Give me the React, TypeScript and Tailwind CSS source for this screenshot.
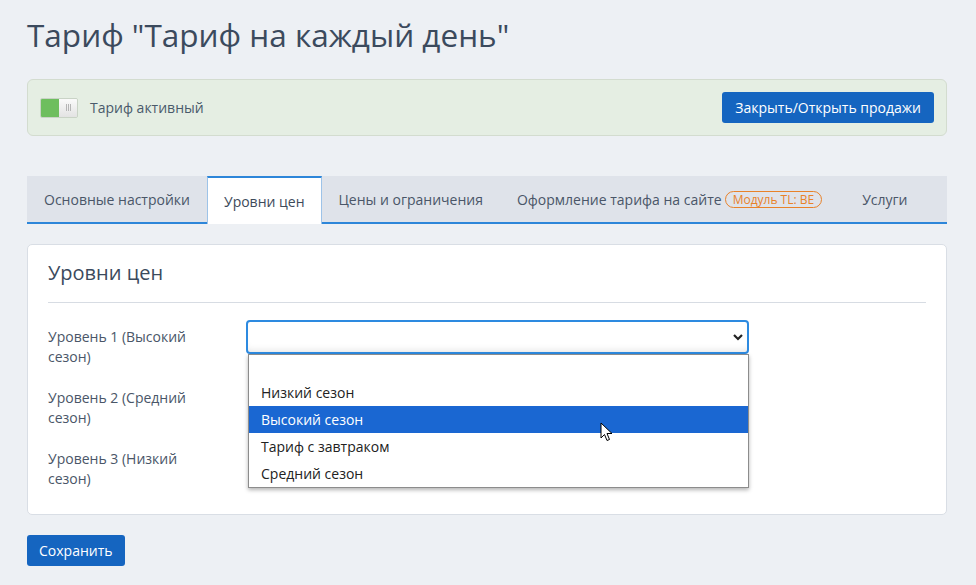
import React from "react";

const font = { fontFamily: '"Open Sans", "Noto Sans", sans-serif' };

function Cursor() {
  return (
    <svg width="14" height="22" viewBox="0 0 14 22" className="absolute left-[600px] top-[422px]">
      <path d="M1 1 L1 16 L4.5 12.5 L7 18.5 L9.5 17.5 L7 11.5 L12 11.5 Z" fill="white" stroke="black" strokeWidth="1" strokeLinejoin="round" />
    </svg>
  );
}

export default function App() {
  const options = ["", "Низкий сезон", "Высокий сезон", "Тариф с завтраком", "Средний сезон"];
  return (
    <div className="relative w-[976px] h-[585px] overflow-hidden bg-[#edf0f4] text-[#3d4a5a]" style={font}>
      <div className="px-[27px] pt-[16px]">
        <h1 className="text-[31.5px] leading-[38px] text-[#3b4a5d]">Тариф "Тариф на каждый день"</h1>

        <div className="mt-[25px] h-[57px] w-[920px] flex items-center justify-between rounded-[6px] border border-[#d3dccf] bg-[#e5eee3] pl-[12px] pr-[12px]">
          <div className="flex items-center gap-[12px]">
            <div className="flex h-[20px] w-[38px] overflow-hidden rounded-[2px] border border-[#c9d3c6]">
              <div className="w-[19px] bg-[#6ebe5e]" />
              <div className="flex w-[19px] items-center justify-center bg-gradient-to-b from-[#fafafa] to-[#e3e3e3]">
                <div className="flex gap-[1px]">
                  <div className="h-[7px] w-px bg-[#b5b5b5]" />
                  <div className="h-[7px] w-px bg-[#b5b5b5]" />
                  <div className="h-[7px] w-px bg-[#b5b5b5]" />
                </div>
              </div>
            </div>
            <span className="text-[14px] text-[#4a5a6b]">Тариф активный</span>
          </div>
          <button className="h-[31px] rounded-[3px] bg-[#1565c0] px-[13px] text-[14px] text-white">Закрыть/Открыть продажи</button>
        </div>

        <div className="mt-[40px] flex h-[48px] w-[920px] items-stretch border-b-2 border-[#2d86d9] bg-[#dfe3ea]">
          <div className="flex items-center px-[17px] text-[14px] text-[#4a5668]">Основные настройки</div>
          <div className="relative -mb-[2px] flex items-center border-x border-t-2 border-x-[#9dc3e8] border-t-[#2d86d9] bg-white px-[16px] text-[14px] text-[#3d4a5a]">Уровни цен</div>
          <div className="flex items-center px-[17px] text-[14px] text-[#4a5668]">Цены и ограничения</div>
          <div className="flex items-center px-[17px] text-[14px] text-[#4a5668]">
            Оформление тарифа на сайте
            <span className="ml-[3px] rounded-full border border-[#e8822a] px-[7px] text-[12px] leading-[15px] text-[#e8822a]">Модуль TL: BE</span>
          </div>
          <div className="flex items-center px-[17px] text-[14px] text-[#4a5668] ml-[6px]">Услуги</div>
        </div>

        <div className="mt-[20px] h-[271px] w-[920px] rounded-[5px] border border-[#d9dee5] bg-white px-[20px]">
          <h2 className="pt-[14px] text-[20px] leading-[28px] text-[#3b4a5d]">Уровни цен</h2>
          <div className="mt-[15px] h-px bg-[#d7dce3]" />
          <div className="mt-[17px] flex flex-col gap-[14px]">
            {["Уровень 1 (Высокий сезон)", "Уровень 2 (Средний сезон)", "Уровень 3 (Низкий сезон)"].map((l, i) => (
              <div key={i} className="flex items-start">
                <div className="w-[160px] pt-[7px] text-[14px] leading-[20px] text-[#4a5668]">{l}</div>
                <div className="ml-[38px] h-[34px] w-[503px]">
                  {i === 0 && (
                    <div className="flex h-[34px] items-center justify-end rounded-[4px] border-2 border-[#2d8ae0] bg-white pr-[3px] shadow-[inset_0_-6px_8px_-6px_rgba(0,0,0,0.15)]">
                      <svg width="12" height="8" viewBox="0 0 12 8">
                        <path d="M2 2 L6 6 L10 2" stroke="#222" strokeWidth="2.2" fill="none" />
                      </svg>
                    </div>
                  )}
                </div>
              </div>
            ))}
          </div>
        </div>

        <button className="mt-[20px] h-[31px] rounded-[3px] bg-[#1565c0] px-[12px] text-[14px] text-white">Сохранить</button>
      </div>

      <div className="absolute left-[248px] top-[354px] w-[501px] border border-[#8c8c8c] bg-white shadow-[0_2px_4px_rgba(0,0,0,0.3)]">
        {options.map((o, i) => (
          <div
            key={i}
            className={`${i === 0 ? "h-[24px]" : "h-[27px]"} flex items-center px-[12px] text-[14px] ${i === 2 ? "bg-[#1a67d2] text-white" : "text-[#222]"}`}
          >
            {o}
          </div>
        ))}
      </div>
      <Cursor />
    </div>
  );
}
